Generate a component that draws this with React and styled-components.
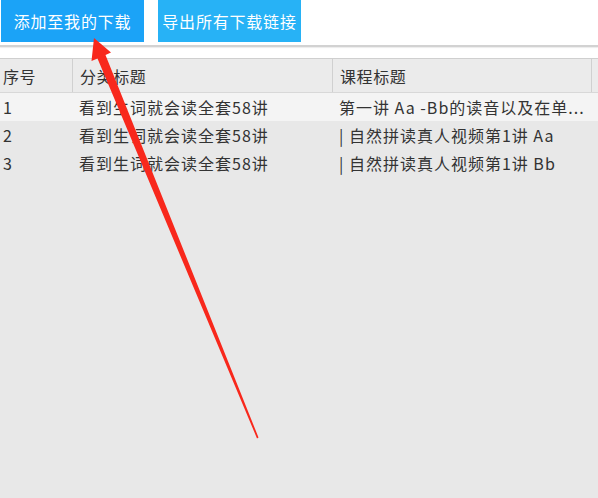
import React from 'react';
import styled, { createGlobalStyle } from 'styled-components';

const GlobalStyle = createGlobalStyle`
  html, body {
    margin: 0;
    padding: 0;
    background: #e8e8e8;
  }
  body {
    font-family: "Noto Sans CJK SC", "Noto Sans", sans-serif;
  }
`;

const Page = styled.div`
  position: relative;
  width: 598px;
  height: 498px;
  overflow: hidden;
  background: #e8e8e8;
`;

const Top = styled.div`
  background: #ffffff;
  padding-bottom: 11px;
`;

const Toolbar = styled.div`
  display: flex;
  gap: 14px;
  padding-left: 1px;
  height: 42px;
`;

const ActionButton = styled.button`
  width: 143px;
  height: 42px;
  border: none;
  margin: 0;
  padding: 0;
  background: ${p => (p.light ? '#27b2f6' : '#1ba3f7')};
  color: #ffffff;
  font-family: "Noto Sans CJK SC", sans-serif;
  font-size: 16px;
  letter-spacing: 0.8px;
`;

const Divider = styled.div`
  margin-top: 3px;
  height: 2px;
  background: #d2d2d2;
  box-shadow: 0 1px 1px #ececec;
`;

const Table = styled.div`
  border-top: 1px solid #cfcfcf;
`;

const HeaderRow = styled.div`
  display: grid;
  grid-template-columns: 73px 260px 259px 6px;
  height: 33px;
  background: #ebebeb;
  border-bottom: 1px solid #d8d8d8;
`;

const HeaderCell = styled.div`
  display: flex;
  align-items: center;
  padding-left: ${p => p.pad || 7}px;
  border-right: 1px solid #d0d0d0;
  font-size: 16px;
  letter-spacing: 0.6px;
  color: #333333;
  &:last-child {
    border-right: none;
  }
`;

const Row = styled.div`
  display: grid;
  grid-template-columns: 73px 260px 265px;
  height: 28px;
  background: ${p => (p.active ? '#f4f4f4' : '#e8e8e8')};
`;

const Cell = styled.div`
  display: flex;
  align-items: center;
  padding-left: ${p => p.pad || 6}px;
  font-size: 16px;
  letter-spacing: 1px;
  color: #333333;
  white-space: nowrap;
`;

const Arrow = styled.svg`
  position: absolute;
  left: 0;
  top: 0;
  pointer-events: none;
`;

const rows = [
  { id: 1, cat: '看到生词就会读全套58讲', title: '第一讲 Aa -Bb的读音以及在单...' },
  { id: 2, cat: '看到生词就会读全套58讲', title: '| 自然拼读真人视频第1讲 Aa' },
  { id: 3, cat: '看到生词就会读全套58讲', title: '| 自然拼读真人视频第1讲 Bb' },
];

export default function App() {
  return (
    <Page>
      <GlobalStyle />
      <Top>
        <Toolbar>
          <ActionButton>添加至我的下载</ActionButton>
          <ActionButton light>导出所有下载链接</ActionButton>
        </Toolbar>
        <Divider />
      </Top>
      <Table>
        <HeaderRow>
          <HeaderCell pad={3}>序号</HeaderCell>
          <HeaderCell>分类标题</HeaderCell>
          <HeaderCell>课程标题</HeaderCell>
          <HeaderCell />
        </HeaderRow>
        {rows.map((r, i) => (
          <Row key={r.id} active={i === 0}>
            <Cell pad={3}>{r.id}</Cell>
            <Cell>{r.cat}</Cell>
            <Cell>{r.title}</Cell>
          </Row>
        ))}
      </Table>
      <Arrow width="598" height="498" viewBox="0 0 598 498">
        <polygon
          fill="#f8281c"
          points="94,38 111,52.5 105.5,55 258.5,437.5 257,438.5 97.5,58.5 91.5,61"
        />
      </Arrow>
    </Page>
  );
}
